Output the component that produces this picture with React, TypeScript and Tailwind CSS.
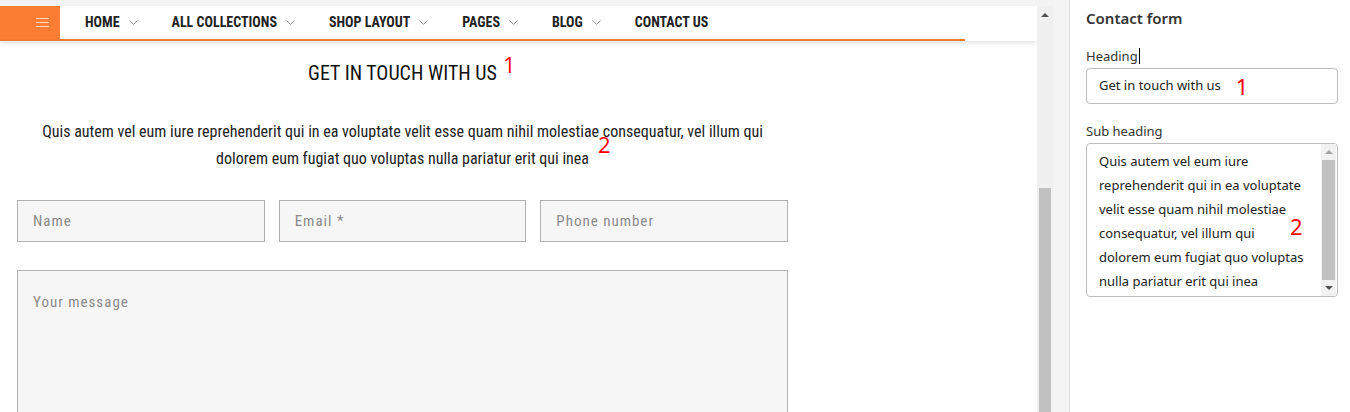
import React from 'react'
import { ChevronDown } from 'lucide-react'

const navItems = [
  { label: 'HOME', caret: true },
  { label: 'ALL COLLECTIONS', caret: true },
  { label: 'SHOP LAYOUT', caret: true },
  { label: 'PAGES', caret: true },
  { label: 'BLOG', caret: true },
  { label: 'CONTACT US', caret: false },
]

const subLines = [
  'Quis autem vel eum iure',
  'reprehenderit qui in ea voluptate',
  'velit esse quam nihil molestiae',
  'consequatur, vel illum qui',
  'dolorem eum fugiat quo voluptas',
  'nulla pariatur erit qui inea',
]

function Preview() {
  return (
    <div className="h-full w-[1037px] overflow-hidden bg-white font-['Roboto',sans-serif] font-stretch-condensed">
      {/* header */}
      <div className="relative z-10 bg-white shadow-[0_2px_5px_rgba(0,0,0,0.12)]">
        <div className="flex h-[35px] w-[965px] items-center border-b-2 border-[#f47a32]">
          <div className="flex h-full w-[60px] items-center justify-end bg-[#fb7c33] pr-[11px]">
            <div className="flex w-[13px] flex-col gap-[3px]">
              <span className="h-px w-full bg-white/70" />
              <span className="h-px w-full bg-white/70" />
              <span className="h-px w-full bg-white/70" />
            </div>
          </div>
          <ul className="ml-[25px] flex items-center text-[14px] font-bold text-[#222]">
            {navItems.map((it) => (
              <li key={it.label} className="mr-[31px] flex items-center">
                {it.label}
                {it.caret && (
                  <ChevronDown size={15} strokeWidth={1.3} className="ml-[6px] text-[#777]" />
                )}
              </li>
            ))}
          </ul>
        </div>
      </div>

      <div className="ml-[17px] w-[771px]">
        <h2 className="mt-[20px] text-center text-[20px] leading-[24px] text-[#111]">
          <span className="relative">
            GET IN TOUCH WITH US
            <span className="absolute -top-[9px] left-full ml-[6px] font-['Open_Sans',sans-serif] text-[22px] font-normal text-[#f00] [font-stretch:normal]">
              1
            </span>
          </span>
        </h2>
        <p className="mx-auto mt-[33px] w-[740px] text-center text-[16px] leading-[27px] text-[#222]">
          Quis autem vel eum iure reprehenderit qui in ea voluptate velit esse quam nihil molestiae consequatur, vel illum qui{' '}
          <span className="relative">
            dolorem eum fugiat quo voluptas nulla pariatur erit qui inea
            <span className="absolute -top-[16px] left-full ml-[9px] font-['Open_Sans',sans-serif] text-[22px] leading-none text-[#f00] [font-stretch:normal]">
              2
            </span>
          </span>
        </p>

        <div className="mt-[28px] grid grid-cols-3 gap-[14px]">
          {['Name', 'Email *', 'Phone number'].map((p) => (
            <div
              key={p}
              className="flex h-[42px] items-center border border-[#b0b0b0] bg-[#f6f6f6] pl-[15px] text-[15px] tracking-[1px] text-[#8a8a8a]"
            >
              {p}
            </div>
          ))}
        </div>

        <div className="mt-[28px] h-[200px] border border-[#b0b0b0] bg-[#f6f6f6] pl-[15px] pt-[20px] text-[15px] tracking-[1px] text-[#8a8a8a]">
          Your message
        </div>
      </div>
    </div>
  )
}

function PageScrollbar() {
  return (
    <div className="flex h-full w-[16px] flex-col bg-[#f0f0f0]">
      <div className="flex h-[16px] items-center justify-center pt-[2px]">
        <span className="h-0 w-0 border-x-[4px] border-b-[4px] border-x-transparent border-b-[#505050]" />
      </div>
      <div className="h-[166px]" />
      <div className="mx-[2px] flex-1 bg-[#c1c1c1]" />
    </div>
  )
}

function Settings() {
  return (
    <div className="h-full flex-1 bg-white pl-[16px] pr-[12px] font-['Noto_Sans',sans-serif] text-[#333]">
      <h3 className="pt-[8px] text-[15px] font-semibold leading-[20px] text-[#333]">Contact form</h3>

      <label className="mt-[19px] flex items-center text-[13px] leading-[18px] text-[#333]">
        Heading
        <span className="ml-px h-[16px] w-px bg-black" />
      </label>
      <div className="mt-[3px] flex h-[36px] items-center rounded-[4px] border border-[#bdbdbd] pl-[12px] text-[13px] text-[#222]">
        Get in touch with us
        <span className="ml-[15px] text-[22px] leading-none text-[#f00]">1</span>
      </div>

      <label className="mt-[18px] block text-[13px] leading-[18px] text-[#333]">Sub heading</label>
      <div className="relative mt-[3px] flex h-[154px] rounded-[4px] border border-[#bdbdbd]">
        <div className="flex-1 pl-[12px] pt-[5px] text-[13px] leading-[24px] text-[#222]">
          {subLines.map((l) => (
            <div key={l} className="whitespace-nowrap">
              {l}
            </div>
          ))}
        </div>
        <span className="absolute left-[203px] top-[71px] text-[22px] leading-none text-[#f00]">2</span>
        <div className="mr-px flex w-[15px] flex-col bg-[#f1f1f1]">
          <div className="flex h-[16px] items-center justify-center">
            <span className="h-0 w-0 border-x-[4px] border-b-[4px] border-x-transparent border-b-[#a3a3a3]" />
          </div>
          <div className="mx-[1px] flex-1 bg-[#c1c1c1]" />
          <div className="flex h-[16px] items-center justify-center">
            <span className="h-0 w-0 border-x-[4px] border-t-[4px] border-x-transparent border-t-[#505050]" />
          </div>
        </div>
      </div>
    </div>
  )
}

export default function App() {
  return (
    <div className="flex h-[412px] w-[1350px] overflow-hidden bg-[#f3f3f3]">
      <div className="flex h-full pt-[6px]">
        <Preview />
        <PageScrollbar />
      </div>
      <div className="ml-px h-full w-[16px] border-r border-[#dedede] bg-[#f4f4f4]" />
      <Settings />
    </div>
  )
}
